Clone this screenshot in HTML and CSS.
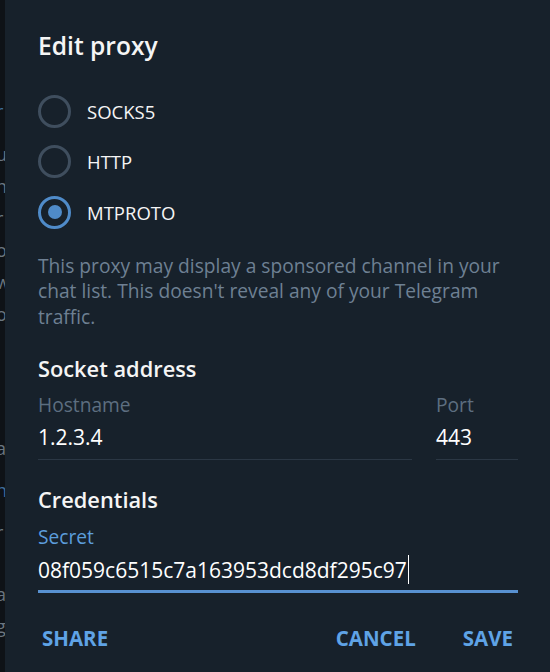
FILE: index.html
```html
<!DOCTYPE html>
<html>
<head>
<meta charset="utf-8">
<link rel="stylesheet" href="styles.css">
</head>
<body>
<div class="app">
  <div class="behind">
    <span class="bl b1 blue">l</span>
    <span class="bl b2 blue">r</span>
    <span class="bl b3">u</span>
    <span class="bl b4">n</span>
    <span class="bl b5">r</span>
    <span class="bl b6">o</span>
    <span class="bl b7">w</span>
    <span class="bl b8">o</span>
    <span class="bl b9">a</span>
    <span class="bl b10 blue">n</span>
    <span class="bl b11">r</span>
    <span class="bl b12">a</span>
    <span class="bl b13">g</span>
  </div>
  <div class="dialog">
    <h1 class="title">Edit proxy</h1>
    <div class="radios">
      <div class="radio"><span class="circle"></span><span class="rlabel">SOCKS5</span></div>
      <div class="radio"><span class="circle"></span><span class="rlabel">HTTP</span></div>
      <div class="radio checked"><span class="circle"><span class="dot"></span></span><span class="rlabel">MTPROTO</span></div>
    </div>
    <p class="about">This proxy may display a sponsored channel in your chat list. This doesn't reveal any of your Telegram traffic.</p>
    <div class="section">Socket address</div>
    <div class="row">
      <div class="field host">
        <div class="flabel">Hostname</div>
        <div class="fvalue">1.2.3.4</div>
      </div>
      <div class="field port">
        <div class="flabel">Port</div>
        <div class="fvalue">443</div>
      </div>
    </div>
    <div class="section sec2">Credentials</div>
    <div class="field active">
      <div class="flabel">Secret</div>
      <div class="fvalue">08f059c6515c7a163953dcd8df295c97<span class="caret"></span></div>
    </div>
    <div class="buttons">
      <span class="btn">SHARE</span>
      <span class="spacer"></span>
      <span class="btn">CANCEL</span>
      <span class="btn">SAVE</span>
    </div>
  </div>
</div>
</body>
</html>
```

FILE: styles.css
```css
html, body {
  margin: 0;
  padding: 0;
  background: #17212b;
}
body {
  font-family: "Open Sans", "Noto Sans", sans-serif;
  width: 550px;
  height: 672px;
  overflow: hidden;
}
.app {
  display: flex;
  height: 672px;
}
.behind {
  width: 5px;
  flex: none;
  background: #0e1217;
  overflow: hidden;
  display: flex;
  flex-direction: column;
  font-size: 18px;
  color: #6a7580;
}
.bl {
  display: block;
  height: 18px;
  line-height: 18px;
  margin-left: -4px;
}
.blue { color: #3f6c9a; }
.b1 { margin-top: 14px; }
.b2 { margin-top: 70px; }
.b3 { margin-top: 25px; }
.b4 { margin-top: 14px; }
.b5 { margin-top: 14px; }
.b6 { margin-top: 14px; }
.b7 { margin-top: 14px; }
.b8 { margin-top: 14px; }
.b9 { margin-top: 116px; }
.b10 { margin-top: 24px; }
.b11 { margin-top: 24px; }
.b12 { margin-top: 44px; }
.b13 { margin-top: 14px; }

.dialog {
  flex: 1;
  background: #17212b;
  padding: 30px 32px 0 33px;
  display: flex;
  flex-direction: column;
}
.title {
  margin: 0;
  font-size: 24.6px;
  line-height: 32px;
  font-weight: 600;
  color: #f5f5f5;
}
.radios {
  margin-top: 24px;
  display: flex;
  flex-direction: column;
}
.radio {
  height: 50.5px;
  display: flex;
  align-items: center;
}
.circle {
  width: 33px;
  height: 33px;
  box-sizing: border-box;
  border: 3px solid #3f4e5e;
  border-radius: 50%;
  display: flex;
  align-items: center;
  justify-content: center;
}
.checked .circle {
  border-color: #4f8bc9;
}
.dot {
  width: 14px;
  height: 14px;
  border-radius: 50%;
  background: #4f8bc9;
}
.rlabel {
  margin-left: 16px;
  font-size: 18.5px;
  color: #f5f5f5;
}
.about {
  margin: 15px 0 0;
  font-size: 19.2px;
  line-height: 25.5px;
  color: #6e8093;
}
.section {
  margin-top: 25px;
  font-size: 21.8px;
  line-height: 30px;
  font-weight: 600;
  color: #f5f5f5;
}
.sec2 { margin-top: 25px; }
.row {
  display: flex;
  gap: 24px;
}
.field {
  border-bottom: 1px solid #2b3744;
}
.host { flex: 1; }
.port { width: 82px; }
.flabel {
  margin-top: 9px;
  font-size: 19.2px;
  line-height: 24px;
  color: #5d6e80;
}
.fvalue {
  margin-top: 6px;
  font-size: 21px;
  line-height: 28px;
  color: #ffffff;
  padding-bottom: 8px;
  display: flex;
  align-items: center;
}
.active {
  border-bottom: 3px solid #5891d1;
}
.active .flabel {
  color: #5c9ddc;
  margin-top: 10px;
}
.active .fvalue {
  padding-bottom: 6px;
}
.caret {
  width: 1px;
  height: 29px;
  background: #ffffff;
  margin-left: 1px;
}
.buttons {
  margin-top: 30px;
  display: flex;
  align-items: center;
  height: 30px;
}
.btn {
  font-size: 20.5px;
  font-weight: 700;
  color: #5fa3e6;
  line-height: 30px;
}
.btn:first-child { margin-left: 4px; }
.spacer { flex: 1; }
.btn + .btn { margin-left: 47px; }
.buttons .btn:last-child { margin-right: 5px; }
```
